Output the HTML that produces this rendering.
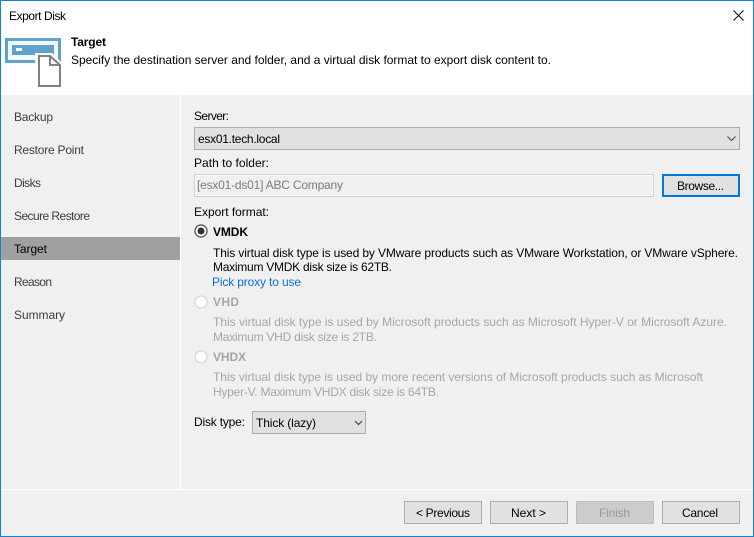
<!DOCTYPE html>
<html><head><meta charset="utf-8"><style>
html,body{margin:0;padding:0;width:754px;height:537px;overflow:hidden;background:#fff}
svg{display:block}
text{font-family:"Liberation Sans",sans-serif;font-size:12px;fill:#000}
.g{fill:#a6a6a6}.s{fill:#3c3c3c}
</style></head><body>
<svg width="754" height="537" viewBox="0 0 754 537" xmlns="http://www.w3.org/2000/svg">
<rect width="754" height="537" fill="#fff"/>
<rect x="1" y="95" width="752" height="441" fill="#f0f0f0"/>
<rect x="180" y="95" width="1" height="394" fill="#fff"/>
<rect x="1" y="489" width="752" height="1" fill="#fff"/>
<rect x="0.5" y="0.5" width="753" height="536" fill="none" stroke="#0f82d8"/>

<text x="9" y="20" textLength="57" lengthAdjust="spacing">Export Disk</text>
<path d="M733.500 10.500L743.500 20.500M743.500 10.500L733.500 20.500" stroke="#111" stroke-width="1.100" fill="none"/>

<rect x="5" y="38" width="56" height="25" fill="#5ea3cd"/>
<rect x="8" y="41" width="50" height="19" fill="#fff" opacity=".92"/>
<rect x="12" y="45" width="42" height="10" fill="#5ea3cd"/>
<rect x="16" y="48" width="6" height="3" fill="#fff"/>
<path d="M35 53H52L64 65V64H64V90H35Z" fill="#fff"/>
<path d="M39 56H50L60 65V86H39Z" fill="#fff" stroke="#808080" stroke-width="2"/>
<path d="M50 56V65H60" fill="none" stroke="#808080" stroke-width="2"/>

<text x="71" y="46" style="font-weight:bold" textLength="35" lengthAdjust="spacing">Target</text>
<text x="71" y="64" textLength="480" lengthAdjust="spacing">Specify the destination server and folder, and a virtual disk format to export disk content to.</text>

<rect x="1" y="237" width="179" height="23" fill="#a0a0a0"/>
<text class="s" x="14" y="121" textLength="39" lengthAdjust="spacing">Backup</text>
<text class="s" x="14" y="154" textLength="70" lengthAdjust="spacing">Restore Point</text>
<text class="s" x="14" y="187" textLength="27" lengthAdjust="spacing">Disks</text>
<text class="s" x="14" y="220" textLength="76" lengthAdjust="spacing">Secure Restore</text>
<text x="14" y="253" textLength="33" lengthAdjust="spacing">Target</text>
<text class="s" x="14" y="286" textLength="38" lengthAdjust="spacing">Reason</text>
<text class="s" x="14" y="319" textLength="51" lengthAdjust="spacing">Summary</text>

<text x="194" y="120" textLength="35" lengthAdjust="spacing">Server:</text>
<rect x="194.500" y="127.500" width="545" height="22" fill="#e1e1e1" stroke="#adadad"/>
<text x="198" y="143" textLength="82" lengthAdjust="spacing">esx01.tech.local</text>
<path d="M727.500 136.500L731.500 140.500L735.500 136.500" fill="none" stroke="#555" stroke-width="1.200"/>

<text x="194" y="167" textLength="75" lengthAdjust="spacing">Path to folder:</text>
<rect x="194.500" y="174.500" width="459" height="22" fill="#f0f0f0" stroke="#cfcfcf"/>
<rect x="195.500" y="175.500" width="457" height="20" fill="none" stroke="#fafafa"/>
<text x="197" y="189" style="fill:#7a7a7a" textLength="146" lengthAdjust="spacing">[esx01-ds01] ABC Company</text>
<rect x="663" y="175" width="76" height="21" fill="#e1e1e1" stroke="#0078d7" stroke-width="2"/>
<text x="677" y="190" textLength="47" lengthAdjust="spacing">Browse...</text>

<text x="194" y="216" textLength="75" lengthAdjust="spacing">Export format:</text>
<circle cx="201" cy="231" r="6" fill="#fff" stroke="#444" stroke-width="1.200"/>
<circle cx="201" cy="231" r="3.500" fill="#333"/>
<text x="213" y="236" style="font-weight:bold" textLength="35" lengthAdjust="spacing">VMDK</text>
<text x="213" y="257" textLength="525" lengthAdjust="spacing">This virtual disk type is used by VMware products such as VMware Workstation, or VMware vSphere.</text>
<text x="213" y="271" textLength="179" lengthAdjust="spacing">Maximum VMDK disk size is 62TB.</text>
<text x="212" y="286" style="fill:#0a6fe0" textLength="89" lengthAdjust="spacing">Pick proxy to use</text>

<circle cx="201" cy="302" r="6" fill="#fff" stroke="#d0d0d0"/>
<text class="g" x="213" y="306" style="font-weight:bold" textLength="26" lengthAdjust="spacing">VHD</text>
<text class="g" x="213" y="326" textLength="514" lengthAdjust="spacing">This virtual disk type is used by Microsoft products such as Microsoft Hyper-V or Microsoft Azure.</text>
<text class="g" x="213" y="341" textLength="164" lengthAdjust="spacing">Maximum VHD disk size is 2TB.</text>

<circle cx="201" cy="357" r="6" fill="#fff" stroke="#d0d0d0"/>
<text class="g" x="213" y="361" style="font-weight:bold" textLength="33" lengthAdjust="spacing">VHDX</text>
<text class="g" x="213" y="381" textLength="490" lengthAdjust="spacing">This virtual disk type is used by more recent versions of Microsoft products such as Microsoft</text>
<text class="g" x="213" y="396" textLength="226" lengthAdjust="spacing">Hyper-V. Maximum VHDX disk size is 64TB.</text>

<text x="194" y="426" textLength="51" lengthAdjust="spacing">Disk type:</text>
<rect x="252.500" y="411.500" width="113" height="22" fill="#e1e1e1" stroke="#adadad"/>
<text x="256" y="427" textLength="60" lengthAdjust="spacing">Thick (lazy)</text>
<path d="M355 421L358.500 424.500L362 421" fill="none" stroke="#444" stroke-width="1.200"/>

<rect x="404.500" y="501.500" width="77" height="22" fill="#e1e1e1" stroke="#adadad"/>
<text x="416" y="517" textLength="54" lengthAdjust="spacing">&lt; Previous</text>
<rect x="490.500" y="501.500" width="77" height="22" fill="#e1e1e1" stroke="#adadad"/>
<text x="511" y="517" textLength="35" lengthAdjust="spacing">Next &gt;</text>
<rect x="576.500" y="501.500" width="77" height="22" fill="#cccccc" stroke="#bfbfbf"/>
<text x="599" y="517" style="fill:#9a9a9a" textLength="31" lengthAdjust="spacing">Finish</text>
<rect x="662.500" y="501.500" width="77" height="22" fill="#e1e1e1" stroke="#adadad"/>
<text x="682" y="517" textLength="36" lengthAdjust="spacing">Cancel</text>
</svg>
</body></html>
